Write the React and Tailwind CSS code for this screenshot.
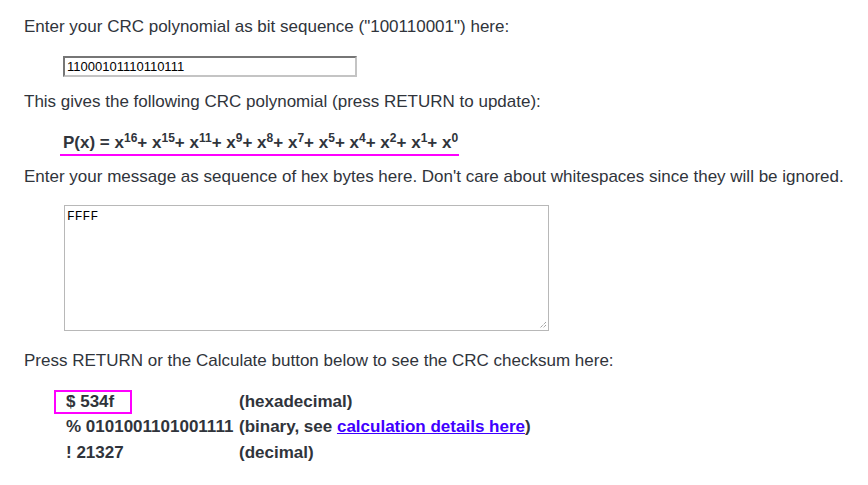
import React from "react";

const terms = [16, 15, 11, 9, 8, 7, 5, 4, 2, 1, 0];

export default function App() {
  return (
    <div className="min-h-[485px] bg-white text-[#30343b] font-['Liberation_Sans',Arial,sans-serif] text-[17px] leading-[20px] px-[24px] pt-[17px]">
      <p>Enter your CRC polynomial as bit sequence ("100110001") here:</p>
      <div className="pl-[39px] pt-[19px]">
        <div className="w-[294px] h-[21px] border-2 border-t-[#767676] border-l-[#767676] border-b-[#c4c4c4] border-r-[#c4c4c4] px-[2px] text-[13px] leading-[17px] text-black">
          11000101110110111
        </div>
      </div>
      <p className="pt-[15px]">This gives the following CRC polynomial (press RETURN to update):</p>
      <div className="pl-[36px] pt-[21px]">
        <div className="inline-block border-b-2 border-[#ff00ff] pl-[3px] pr-[1px] pb-[1px] font-bold leading-[20px]">
          P(x) ={" "}
          {terms.map((t, i) => (
            <span key={t}>
              x<sup className="text-[12px]">{t}</sup>
              {i < terms.length - 1 ? "+ " : ""}
            </span>
          ))}
        </div>
      </div>
      <p className="pt-[11px]">Enter your message as sequence of hex bytes here. Don't care about whitespaces since they will be ignored.</p>
      <div className="pl-[40px] pt-[18px]">
        <div className="relative w-[485px] h-[126px] border border-[#b8b8b8] px-[2px] pt-[3px] font-['Liberation_Mono','Courier_New',monospace] text-[13px] leading-[15px] text-black">
          FFFF
          <svg className="absolute right-[1px] bottom-[1px]" width="9" height="9" viewBox="0 0 9 9">
            <path d="M8 2 L2 8 M8 5 L5 8" stroke="#7a7a7a" strokeWidth="1" strokeDasharray="1 1" />
          </svg>
        </div>
      </div>
      <p className="pt-[20px]">Press RETURN or the Calculate button below to see the CRC checksum here:</p>
      <div className="pl-[30px] pt-[18px] font-bold">
        <div className="flex h-[25px] items-center">
          <div className="w-[185px]">
            <span className="inline-block border-2 border-[#ff00ff] pl-[10px] pr-[16px] leading-[20px]">$ 534f</span>
          </div>
          <div>(hexadecimal)</div>
        </div>
        <div className="flex h-[26px] items-center">
          <div className="w-[185px] pl-[12px]">% 0101001101001111</div>
          <div>
            (binary, see <a href="#" className="text-[#4000ff] underline">calculation details here</a>)
          </div>
        </div>
        <div className="flex h-[25px] items-center">
          <div className="w-[185px] pl-[12px]">! 21327</div>
          <div>(decimal)</div>
        </div>
      </div>
    </div>
  );
}
